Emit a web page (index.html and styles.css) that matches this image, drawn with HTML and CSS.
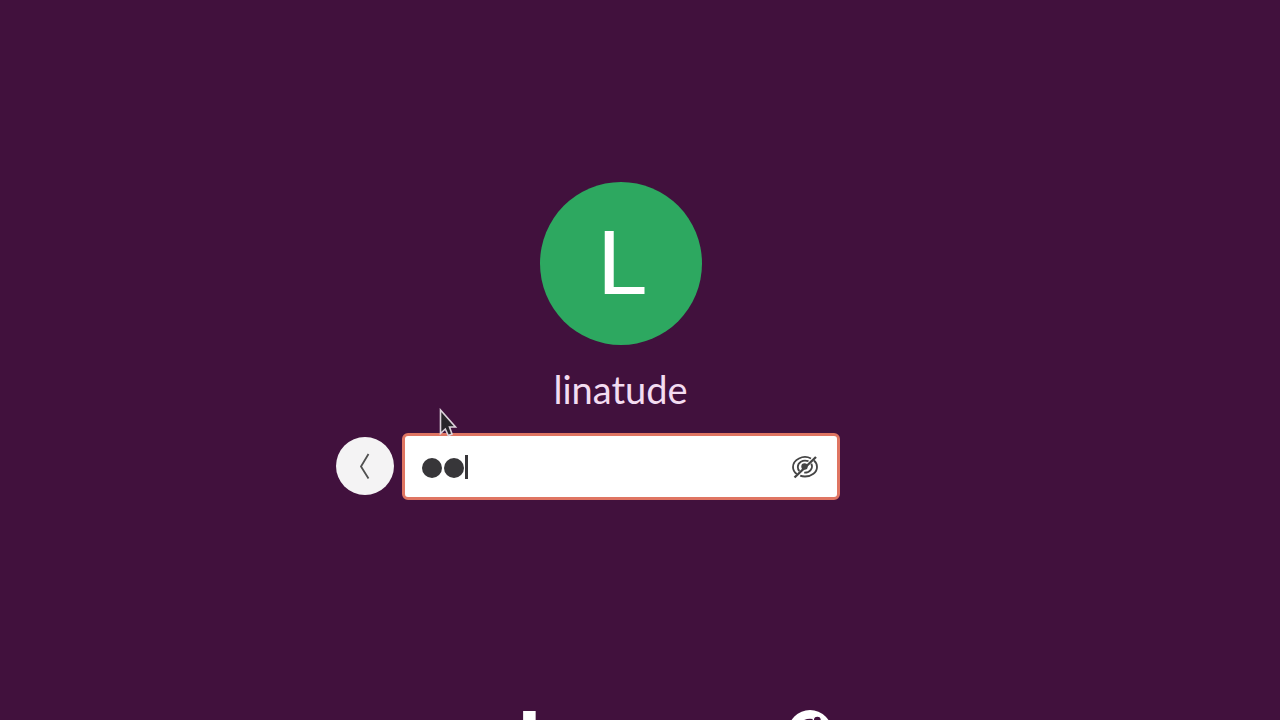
FILE: index.html
```
<!DOCTYPE html>
<html lang="en">
<head>
  <meta charset="UTF-8">
  <title>Login</title>
  <link rel="stylesheet" href="styles.css">
</head>
<body>
  <main class="login">
    <div class="avatar"><span class="initial">L</span></div>
    <div class="username">linatude</div>
    <form class="prompt">
      <button type="button" class="back" aria-label="Back">
        <svg width="58" height="58" viewBox="0 0 58 58">
          <path d="M32.500 17 L25 29.500 L32.500 41.500" fill="none" stroke="#505050" stroke-width="1.800"/>
        </svg>
      </button>
      <div class="password">
        <span class="dot"></span>
        <span class="dot"></span>
        <span class="caret"></span>
        <svg class="eye" width="28" height="26" viewBox="0 0 28 26">
          <g fill="none" stroke="#444" stroke-width="1.800">
            <path d="M20 4.500 C16.500 2.700 11.500 2.700 8 4.500 C4.500 6.300 2 9.500 2 13 C2 16.200 3.600 18.500 5.800 20"/>
            <path d="M23 6.500 C25 8.200 26 10.500 26 13 C26 18.500 20.500 22.500 14 22.500 C12 22.500 10.500 22.200 9.200 21.600"/>
            <path d="M17.500 7.200 C11.500 5.200 6.800 8.600 6.800 13 C6.800 14.800 7.400 16 8.400 17"/>
            <path d="M20.300 9.700 C22.300 13.500 19.500 18.800 13.200 18.600"/>
            <path d="M3.500 23.500 L25 3" stroke-width="2.400"/>
          </g>
          <circle cx="13.500" cy="12.500" r="3.200" fill="#444"/>
        </svg>
      </div>
    </form>
  </main>

  <footer class="brand">
    <span class="brand-name">ubuntu</span>
    <svg class="brand-mark" width="44" height="44" viewBox="0 0 48 48">
      <circle cx="24" cy="24" r="24" fill="#fff"/>
      <circle cx="24" cy="24" r="12" fill="none" stroke="#41113d" stroke-width="5"/>
      <g fill="#41113d" stroke="#fff" stroke-width="1.500">
        <circle cx="32" cy="11" r="4.500"/>
        <circle cx="8" cy="24" r="4.500"/>
        <circle cx="32" cy="37.500" r="4.500"/>
      </g>
    </svg>
  </footer>

  <svg class="pointer" width="20" height="32" viewBox="0 0 20 32">
    <path d="M1.500 2 V25.500 L6.300 21 L9.300 27.500 L13 26 L10.500 19 H16.500 Z" fill="#28252a" stroke="#ddd3dc" stroke-width="1.600"/>
  </svg>
</body>
</html>
```
FILE: styles.css
```
* {
  box-sizing: border-box;
}
body {
  margin: 0;
  height: 720px;
  overflow: hidden;
  background-color: #41113d;
  font-family: Lato, sans-serif;
}
.login {
  display: flex;
  flex-direction: column;
  align-items: center;
  width: 1241px;
  height: 710px;
  padding-top: 182px;
}
.avatar {
  width: 162px;
  height: 163px;
  padding-left: 2px;
  border-radius: 50%;
  background-color: #2da860;
  color: #fff;
  font-family: "Noto Sans", sans-serif;
  font-size: 88px;
  line-height: 156px;
  text-align: center;
}
.initial {
  display: inline-block;
  transform: scaleX(1.12);
}
.username {
  margin-top: 19px;
  height: 50px;
  color: #f3dcf1;
  font-size: 38px;
  line-height: 50px;
}
.prompt {
  display: flex;
  align-items: center;
  gap: 8px;
  width: 570px;
  margin: 19px 0 0;
}
.back {
  width: 58px;
  height: 58px;
  margin-bottom: 1px;
  padding: 0;
  border: none;
  border-radius: 50%;
  background-color: #f4f3f4;
}
.back svg {
  display: block;
}
.password {
  display: flex;
  align-items: center;
  width: 438px;
  height: 67px;
  padding: 0 18px 0 17px;
  border: 3px solid #df7562;
  border-radius: 6px;
  background-color: #fff;
}
.dot {
  width: 20px;
  height: 20px;
  margin: 3px 2px 0 0;
  border-radius: 50%;
  background-color: #373639;
}
.caret {
  width: 3px;
  height: 24px;
  margin-left: -1px;
  background-color: #373639;
}
.eye {
  margin-left: auto;
}
.brand {
  display: flex;
  width: 1280px;
  height: 10px;
  overflow: hidden;
  padding-left: 458px;
}
.brand-name {
  width: 330px;
  margin-top: -12px;
  color: #fff;
  font-family: "Noto Sans", sans-serif;
  font-size: 98px;
  font-weight: 600;
  letter-spacing: -5px;
  line-height: 98px;
}
.brand-mark {
  flex: none;
}
.pointer {
  position: absolute;
  left: 439px;
  top: 408px;
}
```
